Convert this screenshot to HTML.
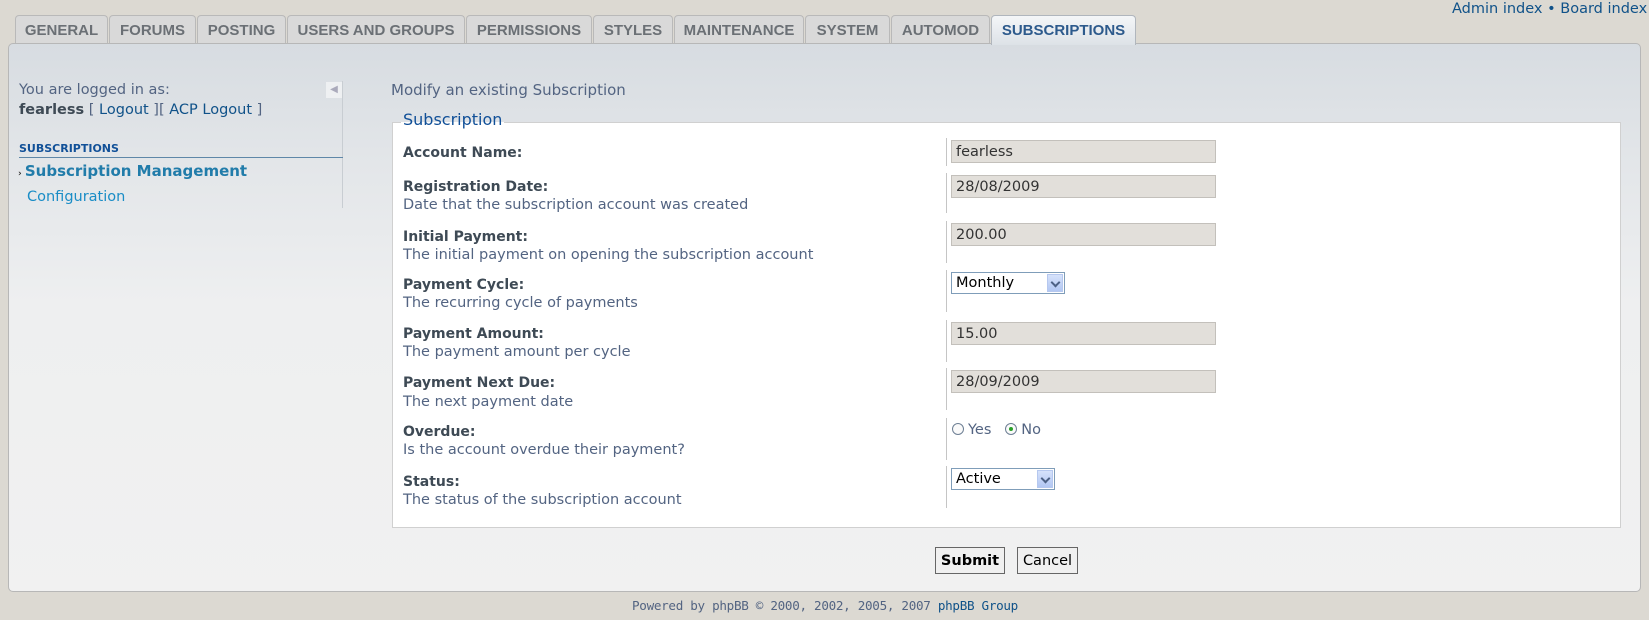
<!DOCTYPE html>
<html><head><meta charset="utf-8"><style>
*{margin:0;padding:0;box-sizing:border-box}
body{width:1649px;height:620px;background:#dcd9d2;font-family:"DejaVu Sans",Verdana,sans-serif;font-size:14.5px;color:#536482;position:relative;overflow:hidden}
.a{position:absolute;white-space:nowrap}
.tab{position:absolute;top:15px;height:29px;background:#d9d9d9;border:1px solid #b9b9b9;border-bottom:none;border-radius:4px 4px 0 0;font-weight:bold;font-size:15px;font-family:"Liberation Sans",sans-serif;color:#6b7075;text-align:center;line-height:29px}
.tab.on{background:linear-gradient(#f4f6f8,#dde2e7);color:#2d5a8c;height:30px;z-index:3;border-color:#b0b6bd}
#panel{position:absolute;left:8px;top:43px;width:1633px;height:549px;border:1px solid #b7b7b7;border-radius:5px;background:linear-gradient(#d7dce1 0px,#e3e6e9 120px,#eeeff0 260px,#f1f1f1 560px)}
.lab{position:absolute;left:403px;font-weight:bold;color:#3e4a55;font-size:14px}
.desc{position:absolute;left:403px;color:#536482;font-size:14.5px}
.inp{position:absolute;left:951px;width:265px;height:23px;background:#e2dfda;border:1px solid #c3c0bb;color:#333;padding:3px 4px 1px;font-size:14.5px}
.sel{position:absolute;left:951px;height:22px;background:#fff;border:1px solid #7f9db9;color:#000;padding:2px 4px 0;font-size:14.5px}
.sel i{position:absolute;right:1px;top:1px;width:16px;height:18px;background:linear-gradient(#d6e2fb,#b2c7f3);border:1px solid #b6c8ef;font-style:normal}
.sel i:after{content:"";position:absolute;left:4px;top:4px;width:5px;height:5px;border-right:2px solid #4d6185;border-bottom:2px solid #4d6185;transform:rotate(45deg)}
.div{position:absolute;left:946px;width:1px;background:#c5c5c5}
.btn{position:absolute;top:547px;height:27px;border:1px solid #666;background:#f0f0f0;font-size:14.5px;color:#000;text-align:center;line-height:26px}
.rad{display:inline-block;width:12px;height:12px;border:1px solid #6d7f94;border-radius:50%;vertical-align:-1px;margin-right:4px;background:#fafafa;position:relative}
</style></head><body>
<div class="a" style="left:1452px;top:1px;color:#105289;font-size:14.5px">Admin index • Board index</div>
<div class="tab" style="left:15px;width:93px">GENERAL</div>
<div class="tab" style="left:109px;width:87px">FORUMS</div>
<div class="tab" style="left:197px;width:89px">POSTING</div>
<div class="tab" style="left:287px;width:178px">USERS AND GROUPS</div>
<div class="tab" style="left:466px;width:126px">PERMISSIONS</div>
<div class="tab" style="left:593px;width:80px">STYLES</div>
<div class="tab" style="left:674px;width:130px">MAINTENANCE</div>
<div class="tab" style="left:805px;width:85px">SYSTEM</div>
<div class="tab" style="left:891px;width:99px">AUTOMOD</div>
<div class="tab on" style="left:991px;width:145px">SUBSCRIPTIONS</div>
<div id="panel"></div>
<div class="a" style="left:19px;top:82px">You are logged in as:</div>
<div class="a" style="left:19px;top:102px"><b style="color:#3e4a55">fearless</b> [ <span style="color:#105289">Logout</span> ][ <span style="color:#105289">ACP Logout</span> ]</div>
<div class="a" style="left:326px;top:82px;width:16px;height:16px;background:#eef0f2;color:#aab;font-size:10px;text-align:center;line-height:16px">◀</div>
<div class="a" style="left:342px;top:81px;width:1px;height:127px;background:#c8cdd2"></div>
<div class="a" style="left:19px;top:142px;font-size:11px;font-weight:bold;color:#115098">SUBSCRIPTIONS</div>
<div class="a" style="left:19px;top:157px;width:324px;height:1px;background:#5f87a8"></div>
<div class="a" style="left:18px;top:162px;font-weight:bold;color:#217caa;font-size:15px"><span style="font-size:9px;color:#333">›&nbsp;</span>Subscription Management</div>
<div class="a" style="left:27px;top:189px;color:#1a8dc6">Configuration</div>
<div class="a" style="left:391px;top:81px;font-size:15px;color:#536482">Modify an existing Subscription</div>
<div class="a" style="left:392px;top:122px;width:1229px;height:406px;background:#fff;border:1px solid #d0d0d0"></div>
<div class="a" style="left:401px;top:110px;font-size:16px;color:#115098;background:linear-gradient(transparent 12px,#fff 12px);padding:0 2px">Subscription</div>
<div class="div" style="top:138px;height:28px"></div>
<div class="div" style="top:173px;height:40px"></div>
<div class="div" style="top:221px;height:42px"></div>
<div class="div" style="top:270px;height:42px"></div>
<div class="div" style="top:320px;height:42px"></div>
<div class="div" style="top:368px;height:42px"></div>
<div class="div" style="top:418px;height:42px"></div>
<div class="div" style="top:466px;height:42px"></div>
<div class="lab" style="top:145px">Account Name:</div>
<div class="lab" style="top:179px">Registration Date:</div><div class="desc" style="top:197px">Date that the subscription account was created</div>
<div class="lab" style="top:229px">Initial Payment:</div><div class="desc" style="top:247px">The initial payment on opening the subscription account</div>
<div class="lab" style="top:277px">Payment Cycle:</div><div class="desc" style="top:295px">The recurring cycle of payments</div>
<div class="lab" style="top:326px">Payment Amount:</div><div class="desc" style="top:344px">The payment amount per cycle</div>
<div class="lab" style="top:375px">Payment Next Due:</div><div class="desc" style="top:394px">The next payment date</div>
<div class="lab" style="top:424px">Overdue:</div><div class="desc" style="top:442px">Is the account overdue their payment?</div>
<div class="lab" style="top:474px">Status:</div><div class="desc" style="top:492px">The status of the subscription account</div>
<div class="inp" style="top:140px">fearless</div>
<div class="inp" style="top:175px">28/08/2009</div>
<div class="inp" style="top:223px">200.00</div>
<div class="sel" style="top:272px;width:114px">Monthly<i></i></div>
<div class="inp" style="top:322px">15.00</div>
<div class="inp" style="top:370px">28/09/2009</div>
<div class="a" style="left:952px;top:422px;color:#536482"><span class="rad"></span>Yes &nbsp; <span class="rad"><span style="position:absolute;left:3px;top:3px;width:4px;height:4px;border-radius:50%;background:#2aa02a"></span></span>No</div>
<div class="sel" style="top:468px;width:104px">Active<i></i></div>
<div class="btn" style="left:935px;width:70px;font-weight:bold">Submit</div>
<div class="btn" style="left:1017px;width:61px">Cancel</div>
<div class="a" style="left:632px;top:598px;font-size:12.6px;color:#536482;font-family:'DejaVu Sans Mono','Liberation Mono',monospace;letter-spacing:-0.3px">Powered by phpBB © 2000, 2002, 2005, 2007 <span style="color:#105289">phpBB Group</span></div>
</body></html>
